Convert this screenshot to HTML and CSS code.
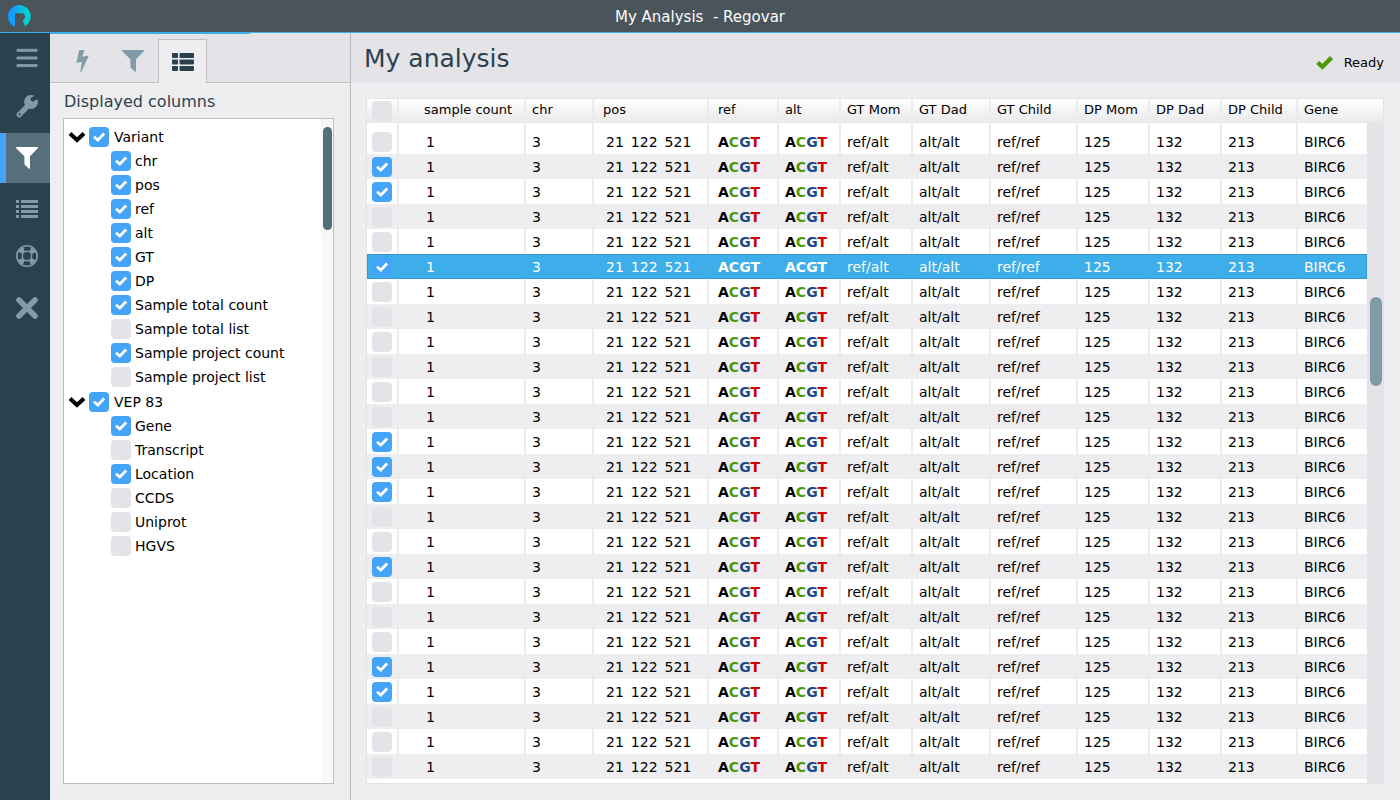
FILE: index.html
```html
<!DOCTYPE html>
<html lang="en">
<head>
<meta charset="utf-8">
<title>My Analysis - Regovar</title>
<link rel="stylesheet" href="styles.css">
</head>
<body>
<svg class="defs" aria-hidden="true">
  <symbol id="funnel" viewBox="0 0 22 22"><path d="M0.6 0H21.4Q22 0 22 .7Q22 1.200 21.600 1.600L14 9.200V21Q14 22 13 21.800L9 18Q8.400 17.500 8.400 16.800V9.200L.4 1.600Q0 1.200 0 .7Q0 0 .6 0Z"/></symbol>
</svg>
<header class="titlebar">
  <svg class="logo" viewBox="0 0 24 24" aria-hidden="true">
    <defs><linearGradient id="lg"><stop offset="0.2" stop-color="#119cff"/><stop offset="0.8" stop-color="#04cfd0"/></linearGradient></defs>
    <path fill="url(#lg)" d="M7 21.800V8.200H15Q17.200 9.600 17 12Q16.800 14.200 14.600 15.400L17 21.200A11.300 11.300 0 1 0 7 21.800Z"/>
  </svg>
  <span class="title">My Analysis&nbsp; - Regovar</span>
</header>
<div class="app">
  <nav class="sidebar" aria-label="Main">
    <button class="nav" aria-label="Menu"><svg viewBox="0 0 22 22"><path d="M1 2.300H21V4.300H1ZM1 10H21V12H1ZM1 17.600H21V19.600H1Z" stroke="currentColor" stroke-linejoin="round"/></svg></button>
    <button class="nav" aria-label="Settings"><svg viewBox="0 0 22 22"><path fill-rule="evenodd" d="M9.800 7.300L.9 16.200Q-.3 17.700.9 19L2 20.100Q3.300 21.200 4.700 20.100L13.600 11.100Q11 10 9.800 7.300ZM3.600 16.300a1 1 0 1 1-.01 2a1 1 0 0 1 .01-2Z"/><path d="M20.800 2.400L17 4.700L14.600 3.400V.9L18.400-1.200A7 7 0 1 0 21.900 6.600Q22.300 3.500 21.300 2.200Z"/></svg></button>
    <button class="nav nav-active" aria-label="Filter"><svg viewBox="0 0 22 22"><use href="#funnel"/></svg></button>
    <button class="nav" aria-label="List"><svg viewBox="0 0 22 22"><path d="M0 3H3V6H0ZM5 3H22V6H5ZM0 8H3V11H0ZM5 8H22V11H5ZM0 13H3V16H0ZM5 13H22V16H5ZM0 18H3V21H0ZM5 18H22V21H5Z"/></svg></button>
    <button class="nav nav-help" aria-label="Help"><svg viewBox="0 0 22 22"><g fill="none" stroke="currentColor"><circle cx="11" cy="11" r="10.200" stroke-width="1.600"/><circle cx="11" cy="11" r="4.700" stroke-width="1.400"/><circle cx="11" cy="11" r="7.400" stroke-width="4.600" stroke-dasharray="5.200 6.424" stroke-dashoffset="-3.200"/></g></svg></button>
    <button class="nav" aria-label="Close"><svg viewBox="0 0 22 22"><path fill="none" stroke="currentColor" stroke-width="5.600" stroke-linecap="round" d="M3 3L19 19M19 3L3 19"/></svg></button>
  </nav>
  <aside class="panel">
    <div class="tabs" role="tablist">
      <button class="tab" role="tab" aria-label="Quick filters"><svg viewBox="0 0 22 22"><path d="M7.200 0H12.400L10.300 6.800L16.900 5.400L9.200 22L8.300 21.700L9.900 11.700L4.500 12.800Z"/></svg></button>
      <button class="tab" role="tab" aria-label="Filters"><svg viewBox="0 0 22 22"><use href="#funnel"/></svg></button>
      <button class="tab tab-active" role="tab" aria-selected="true" aria-label="Displayed columns"><svg viewBox="0 0 22 22"><rect y="2" width="6" height="5" rx="1"/><rect x="7.500" y="2" width="14.500" height="5" rx="1"/><rect y="8.500" width="6" height="5" rx="1"/><rect x="7.500" y="8.500" width="14.500" height="5" rx="1"/><rect y="15" width="6" height="5" rx="1"/><rect x="7.500" y="15" width="14.500" height="5" rx="1"/></svg></button>
    </div>
    <div class="panel-body">
      <h2>Displayed columns</h2>
      <div class="tree">
        <div class="tree-list" id="tree"></div>
        <div class="tree-scroll"><div class="track"><div class="thumb"></div></div></div>
      </div>
    </div>
  </aside>
  <main class="content">
    <div class="heading">
      <h1>My analysis</h1>
      <div class="status"><svg viewBox="0 0 16 14" aria-hidden="true"><path d="M1.600 7L6 11L14.600 2.400"/></svg><span>Ready</span></div>
    </div>
    <div class="grid">
      <table>
        <colgroup><col class="c-check"><col class="c-count"><col class="c-chr"><col class="c-pos"><col class="c-ref"><col class="c-alt"><col class="c-gt"><col class="c-gtdad"><col class="c-gtchild"><col class="c-gt"><col class="c-gt"><col class="c-dpchild"><col></colgroup>
        <thead><tr><th><input type="checkbox" aria-label="Select all"></th><th class="count">sample count</th><th>chr</th><th class="wide">pos</th><th class="wide">ref</th><th>alt</th><th>GT Mom</th><th>GT Dad</th><th>GT Child</th><th>DP Mom</th><th>DP Dad</th><th>DP Child</th><th>Gene</th></tr></thead>
        <tbody id="rows"></tbody>
      </table>
      <div class="grid-scroll"><div class="grid-track"><div class="grid-thumb"></div></div></div>
    </div>
  </main>
</div>
<script src="app.js"></script>
</body>
</html>
```
FILE: app.js
```js
const groups = [
  ["Variant", [["chr", 1], ["pos", 1], ["ref", 1], ["alt", 1], ["GT", 1], ["DP", 1], ["Sample total count", 1], ["Sample total list", 0], ["Sample project count", 1], ["Sample project list", 0]]],
  ["VEP 83", [["Gene", 1], ["Transcript", 0], ["Location", 1], ["CCDS", 0], ["Uniprot", 0], ["HGVS", 0]]]
];
const box = (label, on) => `<label><input type="checkbox"${on ? " checked" : ""}><span>${label}</span></label>`;
document.getElementById("tree").innerHTML = groups.map(([name, items]) => `
  <section class="group">
    <div class="group-head"><button class="toggle" aria-label="Collapse ${name}"><svg viewBox="0 0 18 12"><path d="M2 2.500L9 9L16 2.500"/></svg></button>${box(name, 1)}</div>
    <ul>${items.map(([label, on]) => `<li>${box(label, on)}</li>`).join("")}</ul>
  </section>`).join("");

const checked = new Set([1, 2, 5, 12, 13, 14, 17, 21, 22]);
const selected = 5;
const seq = '<span class="seq"><span>A</span><span class="c">C</span><span class="g">G</span><span class="t">T</span></span>';
const cells = ["3", '<span class="pos"><span>21</span><span>122</span><span>521</span></span>', seq, seq, "ref/alt", "alt/alt", "ref/ref", "125", "132", "213", "BIRC6"];
document.getElementById("rows").innerHTML =
  `<tr class="spacer" aria-hidden="true">${"<td></td>".repeat(13)}</tr>` +
  Array.from({ length: 26 }, (_, i) =>
    `<tr${i === selected ? ' class="selected"' : ""}><td><input type="checkbox" aria-label="Select row ${i + 1}"${checked.has(i) ? " checked" : ""}></td><td class="count">1</td>${cells.map((c, n) => `<td${n === 2 ? ' class="wide"' : ""}>${c}</td>`).join("")}</tr>`
  ).join("");
```
FILE: styles.css
```css
* { box-sizing: border-box; }
body {
  margin: 0;
  height: 100vh;
  display: flex;
  flex-direction: column;
  overflow: hidden;
  background: #eeeef0;
  color: #000;
  font: 14px/20px "DejaVu Sans", sans-serif;
}
button { padding: 0; border: 0; background: none; font: inherit; color: inherit; }
svg { display: block; fill: currentColor; }
.defs { position: absolute; width: 0; height: 0; }
h1, h2, ul { margin: 0; padding: 0; font-weight: normal; list-style: none; }

.titlebar {
  height: 33px;
  flex: none;
  display: flex;
  align-items: center;
  padding: 1px 8px 0;
  background: #4a555b;
  border-bottom: 1px solid #3daee9;
  color: #fcfcfc;
  font-size: 15px;
}
.logo { width: 24px; height: 24px; }
.title { flex: 1; margin-right: 24px; text-align: center; }

.app { flex: 1; display: flex; min-height: 0; }
.sidebar { width: 50px; flex: none; background: #2b424e; color: #819ca8; }
.nav {
  width: 100%;
  height: 50px;
  display: flex;
  align-items: center;
  justify-content: center;
  border-left: 4px solid transparent;
}
.nav svg { width: 22px; height: 22px; overflow: visible; }
.nav-active { border-left: 6px solid #44a5f8; padding-right: 2px; background: #566f7a; color: #fff; }
.nav-help { padding-bottom: 5px; }

.panel { width: 301px; flex: none; display: flex; flex-direction: column; border-right: 1px solid #babab8; }
.tabs {
  height: 50px;
  flex: none;
  display: flex;
  align-items: flex-end;
  padding: 0 8px;
  background: linear-gradient(#3daee9, #3daee9) 0 0 / 200px 1px no-repeat, #e4e3e8;
  border-bottom: 1px solid #c0c0c0;
  color: #819ca8;
}
.tab { width: 50px; height: 43px; display: flex; align-items: center; justify-content: center; }
.tab svg { width: 22px; height: 22px; }
.tab-active { width: 49px; height: 44px; margin-bottom: -1px; background: #eeeef0; border: 1px solid #c0c0c0; border-bottom: 0; color: #2b424e; }
.panel-body { flex: 1; min-height: 0; display: flex; flex-direction: column; padding: 7px 16px 16px 13px; }
h2 { padding-left: 1px; margin-bottom: 4px; font-size: 16px; line-height: 24px; color: #2b424e; }
.tree { flex: 1; min-height: 0; display: flex; background: #fff; border: 1px solid #c0c0c0; }
.tree-list { flex: 1; padding: 6px 4px; }
.group { margin-bottom: 1px; }
.group-head { display: flex; height: 24px; align-items: center; }
.toggle { width: 18px; margin-right: 3px; }
.toggle svg { width: 18px; height: 12px; fill: none; stroke: #000; stroke-width: 4; }
.group li { height: 24px; padding-left: 43px; display: flex; align-items: center; }
label { display: flex; align-items: center; gap: 4px; }
.group-head label { gap: 5px; }
.tree-scroll { width: 12px; background: #f9f9f9; }
.track { height: 122px; padding: 8px 1px 0 2px; background: #f7f7f7; }
.thumb { width: 9px; height: 103px; border-radius: 5px; background: #546f7a; }

input[type="checkbox"] {
  appearance: none;
  display: block;
  flex: none;
  width: 20px;
  height: 20px;
  margin: 0;
  border-radius: 4px;
  background: #e4e3e8;
}
input[type="checkbox"]:checked {
  background: #44a5f8 url("data:image/svg+xml,%3Csvg xmlns='http://www.w3.org/2000/svg' viewBox='0 0 20 20'%3E%3Cpath d='M5 9.800L8.800 13L15.200 6.600' fill='none' stroke='white' stroke-width='2.800'/%3E%3C/svg%3E");
}

.content { flex: 1; min-width: 0; display: flex; flex-direction: column; }
.heading {
  height: 50px;
  flex: none;
  display: flex;
  align-items: center;
  justify-content: space-between;
  padding: 0 16px 0 13px;
  background: #e4e3e8;
}
h1 { padding-top: 2px; font-size: 25px; line-height: 48px; color: #2b424e; }
.status { display: flex; align-items: center; gap: 11px; padding-top: 9px; font-size: 13px; }
.status svg { width: 17px; height: 15px; fill: none; stroke: #4e9a06; stroke-width: 4; }

.grid {
  flex: 1;
  min-height: 0;
  margin: 15px 16px 16px 15px;
  display: flex;
  overflow: hidden;
  background: #fff;
  border: 1px solid #e4e3e4;
}
table { flex: 1; width: 0; height: max-content; table-layout: fixed; border-collapse: separate; border-spacing: 0; }
.c-check { width: 32px; }
.c-count { width: 127px; }
.c-chr { width: 68px; }
.c-pos { width: 115px; }
.c-ref { width: 70px; }
.c-alt { width: 62px; }
.c-gt { width: 72px; }
.c-gtdad { width: 78px; }
.c-gtchild { width: 87px; }
.c-dpchild { width: 76px; }
th, td { height: 25px; padding: 0 0 0 6px; border-right: 2px solid #ececec; text-align: left; white-space: nowrap; }
th:last-child, td:last-child { border-right: 0; }
th { height: 24px; padding-bottom: 2px; background: linear-gradient(#fff, #e9e9e9); font-size: 13px; font-weight: normal; }
th:first-child, td:first-child { padding: 0 0 0 5px; }
.spacer td { height: 6px; }
tbody tr:nth-child(odd):not(.spacer) td { background: #eeeef0; }
td.count { padding-left: 27px; }
th.count { padding-left: 25px; }
.wide { padding-left: 9px; }
.pos { display: flex; gap: 7px; padding-left: 6px; }
.seq { font-weight: bold; }
.c { color: #4e9a06; }
.g { color: #204a87; }
.t { color: #cc0000; }
tbody tr.selected:not(.spacer) td { background: #3daee9; color: #fff; border-top: 1px solid #3697cb; border-bottom: 1px solid #3697cb; border-right-color: #3daee9; }
tbody tr.selected td:first-child { border-left: 1px solid #3697cb; padding-left: 4px; }
tbody tr.selected td:last-child { border-right: 1px solid #3697cb; }
.selected .seq span { color: #fff; }
.grid-scroll { width: 16px; flex: none; background: linear-gradient(#fff, #e9e9e9) 0 0 / 100% 24px no-repeat, #e4e3e8; padding-top: 24px; }
.grid-track { padding: 174px 1px 0 3px; }
.grid-thumb { width: 12px; height: 89px; border-radius: 6px; background: #819ca8; }
```
